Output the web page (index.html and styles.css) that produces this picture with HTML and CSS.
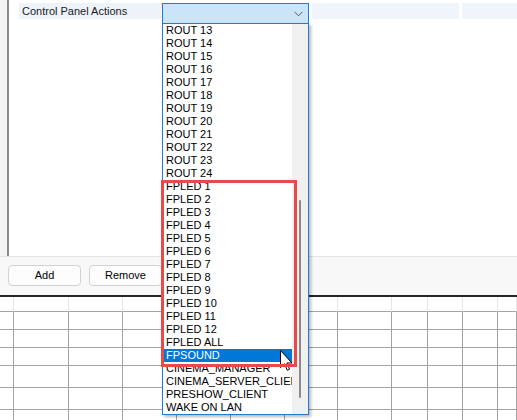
FILE: index.html
```html
<!DOCTYPE html>
<html>
<head>
<meta charset="utf-8">
<link rel="stylesheet" href="styles.css">
</head>
<body>
<div class="app">
  <div class="top-panel">
    <div class="gutter"></div>
    <div class="rule"></div>
    <div class="content">
      <div class="prop-row">
        <div class="prop-label">Control Panel Actions</div>
        <div class="combo">
          <svg class="chevron" width="9" height="6" viewBox="0 0 9 6"><path d="M0.5 0.8 L4.5 4.8 L8.5 0.8" fill="none" stroke="#5a5a5a" stroke-width="1"/></svg>
        </div>
        <div class="prop-cell wide"></div>
        <div class="prop-cell rest"></div>
      </div>
    </div>
  </div>
  <div class="toolbar">
    <button class="btn">Add</button>
    <button class="btn">Remove</button>
  </div>
  <div class="divider"></div>
  <div class="grid">
    <div class="c h"></div><div class="c h"></div><div class="c h"></div><div class="c h"></div><div class="c h"></div><div class="c h"></div><div class="c h"></div><div class="c h"></div><div class="c h"></div><div class="c h"></div><div class="c h"></div><div class="c h"></div>
    <div class="c r1"></div><div class="c r1"></div><div class="c r1"></div><div class="c r1"></div><div class="c r1"></div><div class="c r1"></div><div class="c r1"></div><div class="c r1"></div><div class="c r1"></div><div class="c r1"></div><div class="c r1"></div><div class="c r1"></div>
    <div class="c r1"></div><div class="c r1"></div><div class="c r1"></div><div class="c r1"></div><div class="c r1"></div><div class="c r1"></div><div class="c r1"></div><div class="c r1"></div><div class="c r1"></div><div class="c r1"></div><div class="c r1"></div><div class="c r1"></div>
    <div class="c r1"></div><div class="c r1"></div><div class="c r1"></div><div class="c r1"></div><div class="c r1"></div><div class="c r1"></div><div class="c r1"></div><div class="c r1"></div><div class="c r1"></div><div class="c r1"></div><div class="c r1"></div><div class="c r1"></div>
    <div class="c r2"></div><div class="c r2"></div><div class="c r2"></div><div class="c r2"></div><div class="c r2"></div><div class="c r2"></div><div class="c r2"></div><div class="c r2"></div><div class="c r2"></div><div class="c r2"></div><div class="c r2"></div><div class="c r2"></div>
    <div class="c r2"></div><div class="c r2"></div><div class="c r2"></div><div class="c r2"></div><div class="c r2"></div><div class="c r2"></div><div class="c r2"></div><div class="c r2"></div><div class="c r2"></div><div class="c r2"></div><div class="c r2"></div><div class="c r2"></div>
    <div class="c r2"></div><div class="c r2"></div><div class="c r2"></div><div class="c r2"></div><div class="c r2"></div><div class="c r2"></div><div class="c r2"></div><div class="c r2"></div><div class="c r2"></div><div class="c r2"></div><div class="c r2"></div><div class="c r2"></div>
  </div>

  <div class="dropdown">
    <ul class="list">
      <li>ROUT 13</li>
      <li>ROUT 14</li>
      <li>ROUT 15</li>
      <li>ROUT 16</li>
      <li>ROUT 17</li>
      <li>ROUT 18</li>
      <li>ROUT 19</li>
      <li>ROUT 20</li>
      <li>ROUT 21</li>
      <li>ROUT 22</li>
      <li>ROUT 23</li>
      <li>ROUT 24</li>
      <li>FPLED 1</li>
      <li>FPLED 2</li>
      <li>FPLED 3</li>
      <li>FPLED 4</li>
      <li>FPLED 5</li>
      <li>FPLED 6</li>
      <li>FPLED 7</li>
      <li>FPLED 8</li>
      <li>FPLED 9</li>
      <li>FPLED 10</li>
      <li>FPLED 11</li>
      <li>FPLED 12</li>
      <li>FPLED ALL</li>
      <li class="selected">FPSOUND</li>
      <li>CINEMA_MANAGER</li>
      <li>CINEMA_SERVER_CLIENT</li>
      <li>PRESHOW_CLIENT</li>
      <li>WAKE ON LAN</li>
    </ul>
    <div class="scrollbar"><div class="thumb"></div></div>
  </div>

  <svg class="cursor" width="13" height="26" viewBox="0 0 13 26">
    <path d="M0.5 0.5 L0.5 17.5 L4.5 13.8 L7.3 20.3 L9.6 19.3 L6.9 13 L12 13 Z" fill="#ffffff" stroke="#000000" stroke-width="1" stroke-linejoin="round"/>
  </svg>
  <div class="highlight-box"></div>
</div>
</body>
</html>
```

FILE: styles.css
```css
* { box-sizing: border-box; }

html, body {
  margin: 0;
  padding: 0;
  background: #ffffff;
}

body {
  font-family: "Liberation Sans", Arial, sans-serif;
  font-size: 11px;
  color: #000000;
  width: 517px;
  height: 420px;
  overflow: hidden;
}

.app {
  position: relative;
  width: 517px;
  height: 420px;
  overflow: hidden;
}

/* top property panel */
.top-panel {
  display: flex;
  height: 256px;
}

.gutter {
  width: 7px;
  background: #f4f4f4;
}

.rule {
  width: 2px;
  background: #8a8a8a;
}

.content {
  flex: 1;
  background: #ffffff;
}

.prop-row {
  display: flex;
  align-items: flex-start;
  padding-top: 3px;
  padding-left: 10px;
}

.prop-label {
  width: 143px;
  height: 16px;
  line-height: 16px;
  padding-left: 3px;
  background: #eef3fa;
  color: #1a1a1a;
  white-space: nowrap;
}

.combo {
  width: 147px;
  height: 21px;
  border: 1px solid #1f7bd6;
  background: #cce4f7;
  display: flex;
  align-items: center;
  justify-content: flex-end;
  padding-right: 5px;
}

.chevron {
  display: block;
  margin-top: 1px;
}

.prop-cell {
  height: 16px;
  background: #f0f5fb;
  margin-left: 3px;
}

.prop-cell.wide { width: 147px; }
.prop-cell.rest { flex: 1; }

/* toolbar with buttons */
.toolbar {
  height: 39px;
  border-top: 1px solid #e4e4e4;
  background: #f8f8f8;
  display: flex;
  align-items: flex-start;
  gap: 8px;
  padding-top: 8px;
  padding-left: 8px;
}

.btn {
  width: 73px;
  height: 21px;
  border: 1px solid #d2d2d2;
  border-radius: 4px;
  background: #fdfdfd;
  font-family: "Liberation Sans", Arial, sans-serif;
  font-size: 11px;
  color: #000000;
  padding: 0;
  line-height: 19px;
}

.divider {
  height: 2px;
  background: #262626;
}

/* grid below */
.grid {
  display: grid;
  grid-template-columns: 14px 55px 54px 54px 54px 54px 53px 54px 36px 35px 35px 1fr;
  grid-template-rows: 15px 18px 18px 18px 22px 22px 22px;
}

.c {
  border-right: 1px solid #a3a3a3;
  border-bottom: 1px solid #a3a3a3;
  background: #ffffff;
}

.c.h {
  border-right-color: #e6e6e6;
}

/* dropdown list overlay */
.dropdown {
  position: absolute;
  left: 162px;
  top: 23px;
  width: 147px;
  height: 392px;
  border: 1px solid #1f7bd6;
  background: #ffffff;
  display: flex;
  box-shadow: 2px 2px 3px rgba(0, 0, 0, 0.28);
}

.list {
  list-style: none;
  margin: 0;
  padding: 0;
  width: 129px;
}

.list li {
  height: 13px;
  line-height: 13px;
  margin-left: 1px;
  padding-left: 2px;
  white-space: nowrap;
  overflow: hidden;
  color: #000000;
}

.list li.selected {
  background: #0078d7;
  color: #ffffff;
}

.scrollbar {
  flex: 1;
  background: #f0f0f0;
  padding-top: 176px;
  padding-left: 7px;
}

.thumb {
  width: 2px;
  height: 198px;
  background: #8a8a8a;
  border-radius: 1px;
}

.highlight-box {
  position: absolute;
  left: 161px;
  top: 180px;
  width: 136px;
  height: 187px;
  border: 3px solid #e84a4a;
}

.cursor {
  position: absolute;
  left: 280px;
  top: 350px;
}
```
